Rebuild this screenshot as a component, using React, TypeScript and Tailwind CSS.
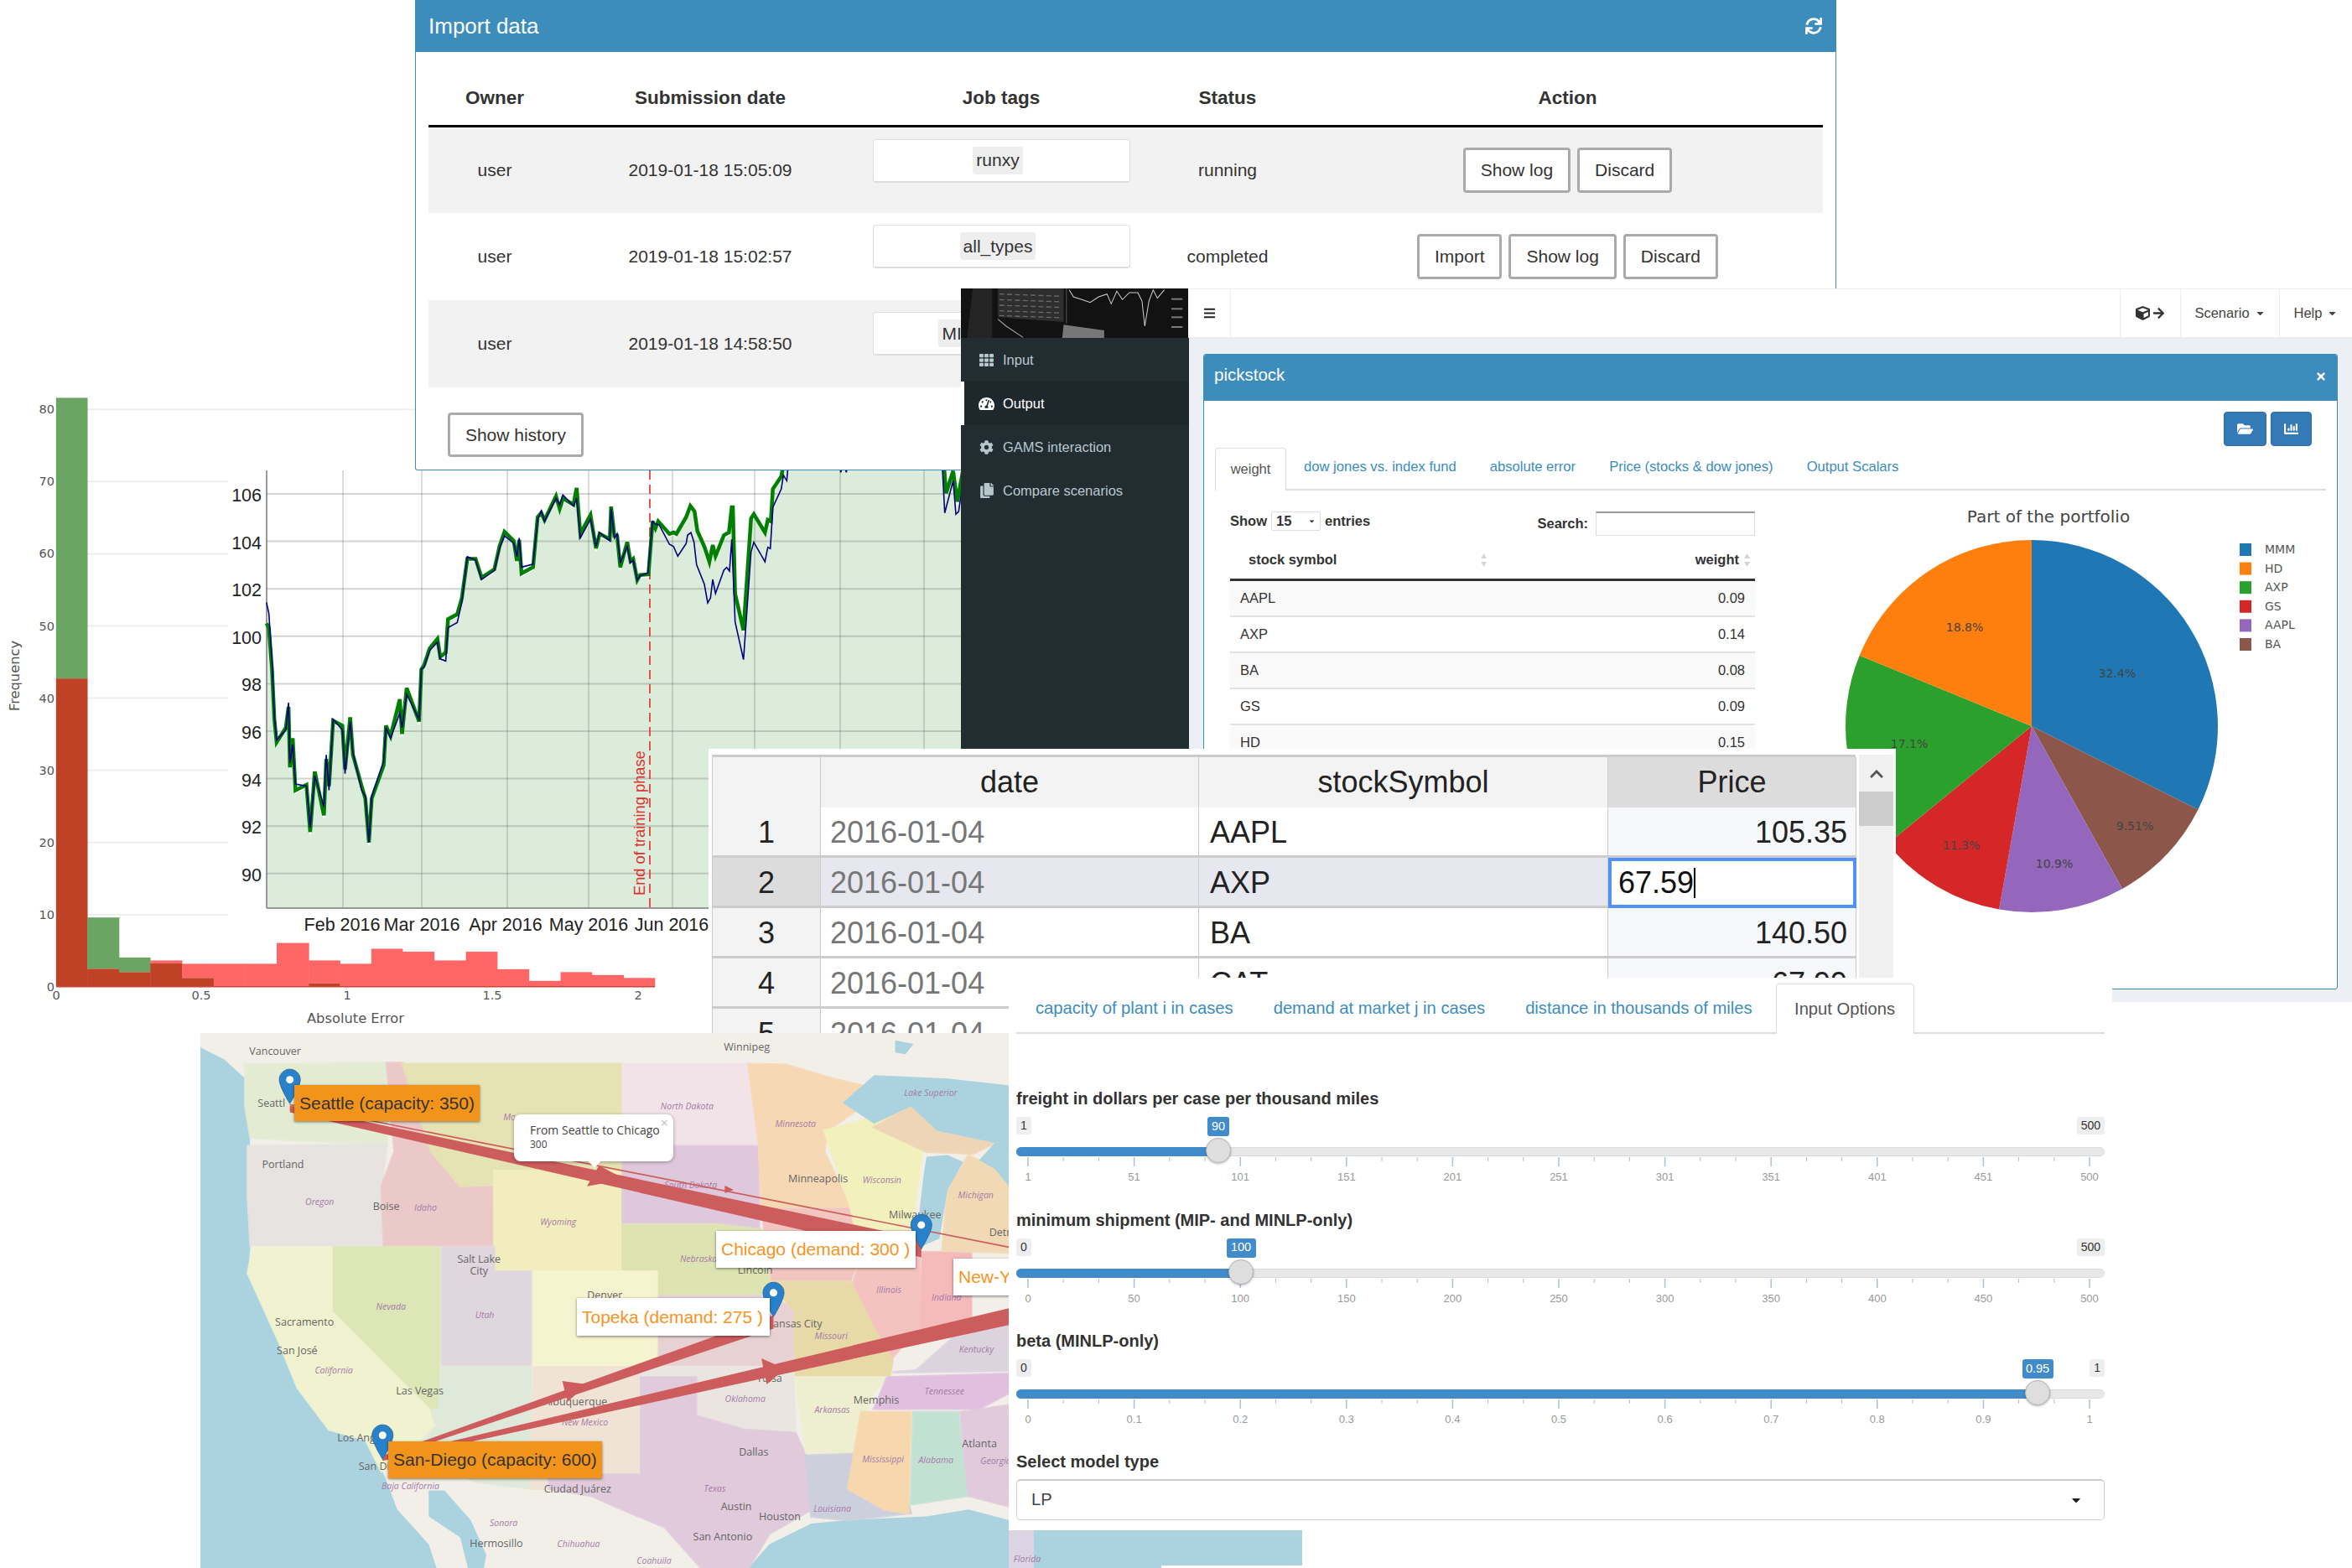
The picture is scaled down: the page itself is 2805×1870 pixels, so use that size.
import React from "react";
import {
  FaArrowRight,
  FaBars,
  FaCaretDown,
  FaChartBar,
  FaChevronUp,
  FaCog,
  FaCopy,
  FaCube,
  FaFolderOpen,
  FaSync,
  FaTachometerAlt,
  FaTh,
  FaTimes,
} from "react-icons/fa";

type Pt = [number, number];

// read off the crops of the reference, converted to page pixels
const h3 = (p: Pt): Pt => [p[0] * 0.548, 460 + p[1] * 0.4974];
const c8 = (p: Pt): Pt => [760 + p[0] / 3, 555 + p[1] / 3];
const m5 = (p: Pt): Pt => [230 + p[0] * 0.625, 1220 + p[1] * 0.4145];
const str = (ps: Pt[]) => ps.map((p) => `${p[0].toFixed(1)},${p[1].toFixed(1)}`).join(" ");

const greenLine: Pt[] = [
  ...([[580,570],[585,580],[592,680],[597,800],[602,855],[622,820],[628,770],[631,915],[637,845],[643,970],[667,957],[675,1070],[685,925],[705,1030],[710,895],[716,960],[725,803],[745,815],[751,920],[762,795],[768,885],[787,960],[795,990],[803,1095],[809,990],[835,910],[840,815],[850,840],[870,752],[875,835],[885,725],[912,805],[917,680],[923,670],[935,630],[952,607],[958,650],[970,640],[975,560],[995,548],[1005,510],[1017,415],[1035,415],[1048,460],[1076,440],[1087,385],[1098,350],[1118,372],[1125,420],[1130,370],[1135,450],[1160,435],[1170,315],[1178,305],[1185,322],[1210,265],[1218,295],[1225,270],[1248,285],[1255,245],[1263,355],[1285,310],[1297,390],[1305,355],[1327,368],[1330,290],[1337,360],[1343,360],[1350,435],[1365,375],[1372,420],[1378,415]] as Pt[]).map(h3),
  ...([[0,410],[10,392],[40,390],[55,200],[65,225],[75,200],[115,245],[130,240],[140,245],[175,185],[190,145],[205,165],[215,235],[240,290],[258,345],[270,285],[280,325],[310,250],[328,240],[338,150],[342,150],[350,460],[380,590],[407,190],[417,175],[457,240],[467,195],[478,200],[485,85],[515,40],[520,15],[535,-100],[1090,-100],[1105,100],[1130,20],[1145,130],[1165,20]] as Pt[]).map(c8),
];

const blueLine: Pt[] = [
  ...([[580,520],[585,545],[592,660],[597,790],[602,850],[622,825],[628,760],[631,905],[637,860],[643,955],[667,960],[675,1060],[685,935],[705,1010],[710,885],[716,970],[725,800],[745,825],[751,930],[762,805],[768,880],[787,970],[795,985],[803,1095],[809,985],[835,900],[840,820],[850,845],[870,785],[875,820],[885,740],[912,800],[917,680],[923,675],[935,635],[952,615],[958,655],[970,660],[975,580],[995,568],[1005,520],[1017,410],[1035,418],[1048,465],[1076,443],[1087,390],[1098,360],[1118,378],[1125,410],[1130,365],[1135,435],[1160,428],[1170,320],[1178,300],[1185,325],[1210,270],[1218,285],[1225,262],[1248,288],[1255,270],[1263,365],[1285,320],[1297,385],[1305,352],[1327,372],[1330,295],[1337,365],[1343,355],[1350,425],[1365,385],[1372,425],[1378,418]] as Pt[]).map(h3),
  ...([[0,410],[10,395],[38,385],[55,200],[65,210],[78,212],[115,282],[130,290],[145,325],[175,280],[180,250],[192,240],[203,275],[212,355],[240,425],[252,492],[262,475],[270,408],[280,458],[310,375],[320,365],[330,378],[338,265],[350,560],[380,695],[407,310],[417,275],[457,345],[467,293],[476,298],[485,150],[515,85],[523,35],[535,55],[545,-60],[722,-30],[728,25],[738,-10],[748,25],[758,-30],[1088,-60],[1100,170],[1130,55],[1140,175],[1150,165],[1165,60]] as Pt[]).map(c8),
];

const histEdges = [122,190,259,327,396,465,533,602,672,740,808,876,945,1014,1082,1151,1220,1288,1357,1425];
const redTops = [702,1398,1406,1378,1386,1386,1386,1336,1378,1386,1350,1357,1378,1357,1399,1427,1406,1413,1420];
const greenTops = [29,1275,1371,1385,1420,1441,1441,1441,1433,1441,1441,1441,1441,1441,1441,1441,1441,1441,1441];

const States: [string, string, Pt[]][] = [
  ["WA", "#e3ecd3", [[100,120],[370,115],[370,350],[110,330],[100,240]]],
  ["OR", "#e6e3e1", [[105,355],[370,350],[360,470],[365,640],[110,640],[105,500]]],
  ["ID", "#ecc9c9", [[370,115],[400,115],[455,370],[510,470],[572,470],[575,640],[365,640],[360,470],[385,370]]],
  ["MT", "#e5e2b3", [[400,118],[820,118],[820,425],[575,425],[570,465],[510,470],[455,370]]],
  ["WY", "#f1edbd", [[575,425],[820,425],[820,715],[575,715]]],
  ["ND", "#f2e3e8", [[820,118],[1060,118],[1075,350],[820,350]]],
  ["SD", "#e0c8dc", [[820,355],[1080,355],[1080,590],[1000,575],[820,575]]],
  ["NE", "#dde4b2", [[820,580],[1000,580],[1085,595],[1105,780],[885,780],[885,715],[820,715]]],
  ["MN", "#f7d8b4", [[1060,118],[1130,120],[1220,160],[1320,195],[1210,310],[1205,370],[1255,530],[1085,530],[1080,350]]],
  ["IA", "#f2c5c0", [[1085,535],[1265,535],[1280,640],[1255,740],[1105,740]]],
  ["WI", "#f2f0bd", [[1205,310],[1330,260],[1395,330],[1385,440],[1370,600],[1265,600],[1255,530]]],
  ["IL", "#f4c3bf", [[1265,600],[1385,600],[1390,870],[1330,970],[1300,880],[1255,770],[1270,700]]],
  ["IN", "#f5baba", [[1392,660],[1485,660],[1485,860],[1390,890]]],
  ["MI", "#f2d9b5", [[1440,480],[1480,380],[1530,420],[1557,470],[1557,660],[1430,655]]],
  ["UP", "#eed5b5", [[1300,300],[1370,240],[1420,310],[1530,345],[1490,375],[1400,370]]],
  ["MO", "#e8d9a8", [[1105,745],[1255,745],[1300,880],[1335,970],[1330,1015],[1150,1015],[1145,830]]],
  ["KS", "#e8d1d3", [[885,785],[1110,785],[1145,830],[1145,985],[885,985]]],
  ["CO", "#f5f4cf", [[645,715],[885,715],[885,985],[645,985]]],
  ["UT", "#e0d7de", [[475,645],[575,645],[575,715],[645,715],[645,985],[475,985]]],
  ["NV", "#dce6b6", [[265,645],[470,645],[470,1110],[450,1115],[265,830]]],
  ["CA", "#f0f2d0", [[115,645],[265,645],[265,830],[450,1110],[465,1160],[430,1205],[360,1290],[330,1200],[260,1170],[200,1050],[165,920],[105,720]]],
  ["AZ", "#dfe9d9", [[475,990],[645,990],[645,1340],[540,1320],[420,1230],[465,1160],[455,1115],[470,1110]]],
  ["NM", "#f0e3d5", [[650,990],[855,990],[855,1300],[680,1300],[680,1340],[645,1340]]],
  ["OK", "#eae5e1", [[960,990],[1145,990],[1150,1180],[1050,1170],[960,1130],[960,1020],[855,1020],[855,990]]],
  ["TX", "#e0cadb", [[855,1020],[960,1020],[960,1130],[1050,1170],[1150,1180],[1170,1245],[1180,1400],[1100,1470],[1060,1568],[970,1568],[900,1450],[820,1400],[760,1360],[680,1340],[680,1300],[855,1300]]],
  ["AR", "#eeefd0", [[1150,1020],[1330,1020],[1300,1060],[1270,1170],[1260,1235],[1170,1235]]],
  ["LA", "#cdd0dc", [[1170,1245],[1260,1240],[1250,1340],[1360,1350],[1370,1410],[1250,1430],[1180,1420]]],
  ["MS", "#f7d8ae", [[1275,1120],[1370,1120],[1365,1410],[1320,1400],[1250,1340],[1262,1240]]],
  ["AL", "#c3e1d3", [[1375,1120],[1460,1120],[1480,1360],[1370,1385]]],
  ["GA", "#e0cadb", [[1465,1120],[1557,1100],[1557,1390],[1480,1360]]],
  ["TN", "#e0bfdf", [[1325,1020],[1557,1010],[1557,1065],[1500,1110],[1300,1110]]],
  ["KY", "#dcd3de", [[1335,1005],[1380,1000],[1440,920],[1480,860],[1557,870],[1557,1000]]],
];

const Lakes: Pt[][] = [
  [[1300,150],[1440,160],[1560,180],[1560,340],[1530,345],[1420,310],[1370,240],[1300,290],[1240,230]],
  [[1400,385],[1440,380],[1470,400],[1440,480],[1425,620],[1395,640],[1385,560],[1395,430]],
  [[1530,345],[1557,340],[1557,470],[1530,420],[1500,395]],
  [[1340,50],[1375,60],[1360,90],[1340,85]],
];

const cityLabels: [string, number, number][] = [
  ["Vancouver", 157, 81], ["Winnipeg", 1057, 69], ["Portland", 172, 408], ["Boise", 369, 529],
  ["Salt Lake", 546, 681], ["City", 546, 713], ["Denver", 786, 783], ["Sacramento", 213, 861],
  ["San José", 199, 944], ["Las Vegas", 433, 1059], ["Los Ang", 312, 1194], ["San Di", 346, 1277],
  ["Seattl", 150, 231], ["Minneapolis", 1193, 449], ["Milwaukee", 1378, 552], ["Lincoln", 1073, 711],
  ["Kansas City", 1148, 865], ["Dallas", 1070, 1236], ["Austin", 1037, 1391], ["Houston", 1120, 1421],
  ["San Antonio", 1011, 1479], ["Ciudad Juárez", 734, 1341], ["Hermosillo", 579, 1497], ["Memphis", 1304, 1086],
  ["Atlanta", 1501, 1211], ["Albuquerque", 730, 1091], ["Tulsa", 1100, 1023], ["Detr", 1540, 603],
];

const stateLabels: [string, number, number][] = [
  ["North Dakota", 943, 240], ["South Dakota", 950, 466], ["Minnesota", 1150, 290], ["Wisconsin", 1315, 451],
  ["Michigan", 1494, 495], ["Oregon", 242, 513], ["Idaho", 444, 531], ["Wyoming", 697, 572],
  ["Nebraska", 965, 678], ["Nevada", 378, 816], ["Utah", 557, 840], ["California", 269, 998],
  ["Illinois", 1328, 768], ["Indiana", 1438, 790], ["Missouri", 1218, 900], ["Kentucky", 1495, 938],
  ["Oklahoma", 1054, 1081], ["Arkansas", 1220, 1113], ["Tennessee", 1434, 1060], ["Texas", 996, 1339],
  ["Louisiana", 1220, 1396], ["Mississippi", 1317, 1254], ["Alabama", 1418, 1256], ["Georgia", 1532, 1260],
  ["New Mexico", 748, 1149], ["Sonora", 593, 1438], ["Chihuahua", 736, 1498], ["Coahuila", 880, 1547],
  ["Baja California", 415, 1331], ["Lake Superior", 1408, 201], ["Mo", 604, 270],
];

function Pin({ tip }: { tip: Pt }) {
  return (
    <g transform={`translate(${tip[0] - 12.5} ${tip[1] - 41})`}>
      <path d="M12.5 0C5.6 0 0 5.6 0 12.5 0 21 12.5 41 12.5 41S25 21 25 12.5C25 5.6 19.4 0 12.5 0z" fill="#2a81cb" stroke="#2e6c97" />
      <circle cx="12.5" cy="12.5" r="4.5" fill="#fff" />
    </g>
  );
}

function Histogram() {
  const ticksY = [0, 10, 20, 30, 40, 50, 60, 70, 80];
  const ticksX: [string, number][] = [["0", 67], ["0.5", 240], ["1", 414], ["1.5", 587], ["2", 761]];
  const base = 460 + 1441 * 0.4974;
  const ty = (z: number) => 460 + z * 0.4974;
  return (
    <svg className="absolute left-0 top-[460px] w-[845px] h-[772px] [font-family:'DejaVu_Sans',sans-serif]" viewBox="0 460 845 772">
      {ticksY.slice(1).map((t) => (
        <line key={t} x1="67" x2="845" y1={1177 - t * 8.61} y2={1177 - t * 8.61} stroke="#eeeeee" strokeWidth="2" />
      ))}
      {histEdges.slice(0, -1).map((e, i) => {
        const x = e * 0.548;
        const w = (histEdges[i + 1] - e) * 0.548 + 0.4;
        const r = redTops[i];
        const g = greenTops[i];
        const low = Math.max(r, g);
        return (
          <g key={e}>
            {g < r && <rect x={x} y={ty(g)} width={w} height={ty(r) - ty(g)} fill="#6aa564" />}
            {r < g && <rect x={x} y={ty(r)} width={w} height={ty(g) - ty(r)} fill="#ff6666" />}
            {low < 1441 && <rect x={x} y={ty(low)} width={w} height={base - ty(low)} fill="#bf4227" />}
          </g>
        );
      })}
      <line x1="67" x2="781" y1={base} y2={base} stroke="#c4483a" strokeWidth="1.5" />
      {ticksY.map((t) => (
        <text key={t} x="65" y={1182 - t * 8.61} textAnchor="end" fontSize="14.5" fill="#555">{t}</text>
      ))}
      {ticksX.map(([l, x]) => (
        <text key={l} x={x} y="1192" textAnchor="middle" fontSize="14.5" fill="#555">{l}</text>
      ))}
      <text x="424" y="1220" textAnchor="middle" fontSize="16.3" fill="#555">Absolute Error</text>
      <text transform="translate(23 806) rotate(-90)" textAnchor="middle" fontSize="16.3" fill="#555">Frequency</text>
    </svg>
  );
}

function PriceChart() {
  const ticks = [106, 104, 102, 100, 98, 96, 94, 92, 90];
  const months: [string, number][] = [["Feb 2016", 408], ["Mar 2016", 503], ["Apr 2016", 603], ["May 2016", 702], ["Jun 2016", 801]];
  const verticals = [409, 503, 605, 702, 802, 900, 1002, 1102];
  const last = greenLine[greenLine.length - 1];
  const area = `318,1083 ${str(greenLine.map((p) => [p[0], p[1] + 3] as Pt))} ${last[0]},1083`;
  return (
    <svg className="absolute left-[272px] top-[561px] w-[874px] h-[563px] bg-white" viewBox="272 561 874 563">
      <polygon points={area} fill="#dbecdb" stroke="#ffffff" strokeWidth="2" />
      {ticks.map((t, i) => (
        <line key={t} x1="318" x2="1146" y1={589 + i * 56.6} y2={589 + i * 56.6} stroke="#555" strokeOpacity="0.25" strokeWidth="2" />
      ))}
      {verticals.map((x) => (
        <line key={x} x1={x} x2={x} y1="561" y2="1083" stroke="#555" strokeOpacity="0.28" strokeWidth="1.5" />
      ))}
      <line x1="318" x2="318" y1="561" y2="1083" stroke="#777" strokeWidth="1.5" />
      <line x1="318" x2="1146" y1="1083" y2="1083" stroke="#777" strokeWidth="1.5" />
      <line x1="775" x2="775" y1="561" y2="1083" stroke="#e8413c" strokeWidth="1.8" strokeDasharray="11 6" />
      <polyline points={str(greenLine)} fill="none" stroke="#008000" strokeWidth="4.5" strokeLinejoin="miter" />
      <polyline points={str(blueLine)} fill="none" stroke="#000080" strokeWidth="1.6" />
      {ticks.map((t, i) => (
        <text key={t} x="312" y={598 + i * 56.6} textAnchor="end" fontSize="21.5" fill="#222">{t}</text>
      ))}
      {months.map(([l, x]) => (
        <text key={l} x={x} y="1110" textAnchor="middle" fontSize="21.5" fill="#222">{l}</text>
      ))}
      <text transform="translate(769 1068) rotate(-90)" fontSize="18.3" fill="#e02f2f">End of training phase</text>
    </svg>
  );
}

function ImportPanel() {
  const rows = [
    { date: "2019-01-18 15:05:09", tag: "runxy", status: "running", actions: ["Show log", "Discard"] },
    { date: "2019-01-18 15:02:57", tag: "all_types", status: "completed", actions: ["Import", "Show log", "Discard"] },
    { date: "2019-01-18 14:58:50", tag: "MINLP_model", status: "completed", actions: ["Import", "Show log", "Discard"] },
  ];
  return (
    <section className="absolute left-[495px] top-0 w-[1695px] h-[561px] bg-white border-x border-b border-[#3c8dbc] rounded-b-[3px] text-[#333] text-[21px]">
      <div className="h-[62px] bg-[#3c8dbc] text-white flex items-center justify-between pl-[15px] pr-[16px]">
        <span className="text-[26px]">Import data</span>
        <FaSync className="w-[20px] h-[20px]" />
      </div>
      <div className="px-[15px]">
        <table className="w-[1663px] table-fixed border-collapse">
          <colgroup>
            <col className="w-[158px]" />
            <col className="w-[356px]" />
            <col className="w-[338px]" />
            <col className="w-[202px]" />
            <col className="w-[609px]" />
          </colgroup>
          <thead>
            <tr className="h-[88px] border-b-[3px] border-black text-[22.5px] font-bold text-center">
              {["Owner", "Submission date", "Job tags", "Status", "Action"].map((h) => (
                <th key={h} className="pt-[24px] font-bold">{h}</th>
              ))}
            </tr>
          </thead>
          <tbody>
            {rows.map((r, i) => (
              <tr key={r.date} className={`h-[104px] text-center ${i % 2 === 0 ? "bg-[#f2f2f2]" : "bg-white"}`}>
                <td>user</td>
                <td>{r.date}</td>
                <td className="align-top pt-[14px]">
                  <div className="mx-auto w-[307px] h-[52px] bg-white border border-b-2 border-[#dddddd] rounded-[4px] pr-[8px] flex items-center justify-center">
                    <span className="h-[33px] px-[4px] bg-[#eeeeee] rounded-[3px] flex items-center">{r.tag}</span>
                  </div>
                </td>
                <td>{r.status}</td>
                <td>
                  <div className="flex justify-center gap-[8px]">
                    {r.actions.map((a) => (
                      <button key={a} className="h-[54px] px-[18px] bg-white border-[3px] border-[#aaaaaa] rounded-[4px]">{a}</button>
                    ))}
                  </div>
                </td>
              </tr>
            ))}
          </tbody>
        </table>
        <button className="mt-[30px] ml-[23px] h-[53px] w-[162px] bg-white border-[3px] border-[#aaaaaa] rounded-[4px]">Show history</button>
      </div>
    </section>
  );
}

function Logo() {
  return (
    <svg className="w-[271px] h-[59px] block" viewBox="18 15 812 177" preserveAspectRatio="none">
      <rect x="18" y="15" width="812" height="177" fill="#121212" />
      <polygon points="60,15 130,15 130,192 40,192" fill="#242424" />
      <polygon points="150,15 385,15 385,135 150,118" fill="#2e2e2e" />
      {[35, 55, 75, 95, 112].map((y) => (
        <line key={y} x1="155" x2="380" y1={y} y2={y + 8} stroke="#6a6a6a" strokeWidth="4" strokeDasharray="18 10" />
      ))}
      <line x1="395" x2="395" y1="15" y2="140" stroke="#555" strokeWidth="3" />
      <polyline points="150,125 180,150 240,190" fill="none" stroke="#aaa" strokeWidth="3" />
      <polygon points="385,145 530,165 530,192 380,192" fill="#777" />
      <polyline points="405,20 420,45 450,55 480,65 510,45 540,35 555,70 575,25 595,55 620,30 650,30 665,60 675,150 690,60 705,20 720,50 745,20" fill="none" stroke="#cfcfcf" strokeWidth="3" />
      {[50, 85, 115, 150].map((y) => (
        <rect key={y} x="770" y={y} width="40" height="6" fill="#7a7a7a" />
      ))}
    </svg>
  );
}

function Sidebar() {
  const items = [
    { label: "Input", icon: <FaTh className="w-[17px] h-[17px]" /> },
    { label: "Output", icon: <FaTachometerAlt className="w-[19px] h-[19px]" />, active: true },
    { label: "GAMS interaction", icon: <FaCog className="w-[17px] h-[17px]" /> },
    { label: "Compare scenarios", icon: <FaCopy className="w-[16px] h-[18px]" /> },
  ];
  return (
    <aside className="w-[272px] shrink-0 bg-[#222d32] text-[16.5px] text-[#b8c7ce]">
      <div className="bg-white pr-[1px]">
        <Logo />
      </div>
      {items.map((it) =>
        it.active ? (
          <div key={it.label} className="h-[52px] bg-[#1e282c] border-l-[4px] border-white text-white flex items-center pl-[17px] gap-[10px]">
            <span className="w-[19px] flex justify-center">{it.icon}</span>
            {it.label}
          </div>
        ) : (
          <div key={it.label} className="h-[52px] flex items-center pl-[21px] gap-[10px]">
            <span className="w-[19px] flex justify-center">{it.icon}</span>
            {it.label}
          </div>
        )
      )}
    </aside>
  );
}

function Navbar() {
  return (
    <nav className="h-[60px] bg-white border-t border-b-2 border-[#eeeeee] flex items-stretch text-[16.5px] text-[#444]">
      <div className="w-[50px] border-r border-[#eeeeee] flex items-center justify-center text-[#222]">
        <FaBars className="w-[15px] h-[15px]" />
      </div>
      <div className="flex-1" />
      <div className="w-[73px] border-x border-[#eeeeee] flex items-center justify-center gap-[3px] text-[#333]">
        <FaCube className="w-[17px] h-[17px]" />
        <FaArrowRight className="w-[15px] h-[15px]" />
      </div>
      <div className="w-[118px] border-r border-[#eeeeee] flex items-center justify-center gap-[6px]">
        Scenario <FaCaretDown className="w-[13px] h-[13px]" />
      </div>
      <div className="w-[86px] flex items-center justify-center gap-[6px]">
        Help <FaCaretDown className="w-[13px] h-[13px]" />
      </div>
    </nav>
  );
}

function PortfolioPie() {
  const slices: [string, number, string][] = [
    ["MMM", 32.4, "#1f77b4"],
    ["BA", 9.51, "#8c564b"],
    ["AAPL", 10.9, "#9467bd"],
    ["GS", 11.3, "#d62728"],
    ["AXP", 17.1, "#2ca02c"],
    ["HD", 18.8, "#ff7f0e"],
  ];
  const legend = ["MMM", "HD", "AXP", "GS", "AAPL", "BA"];
  const pct: [string, number, number][] = [
    ["32.4%", 2525, 804], ["18.8%", 2343, 749], ["17.1%", 2277, 888],
    ["11.3%", 2339, 1009], ["10.9%", 2450, 1031], ["9.51%", 2546, 986],
  ];
  const cx = 2423;
  const cy = 867;
  const r = 222;
  let acc = 0;
  return (
    <svg className="w-[694px] h-[596px] [font-family:'DejaVu_Sans',sans-serif]" viewBox="2093 586 694 596">
      <text x="2443" y="624" textAnchor="middle" fontSize="20" fill="#444">Part of the portfolio</text>
      {slices.map(([n, v, c]) => {
        const a0 = (acc / 100.01) * 2 * Math.PI;
        acc += v;
        const a1 = (acc / 100.01) * 2 * Math.PI;
        const d = `M${cx} ${cy}L${cx + r * Math.sin(a0)} ${cy - r * Math.cos(a0)}A${r} ${r} 0 ${v > 50 ? 1 : 0} 1 ${cx + r * Math.sin(a1)} ${cy - r * Math.cos(a1)}Z`;
        return <path key={n} d={d} fill={c} />;
      })}
      {pct.map(([t, x, y]) => (
        <text key={t} x={x} y={y + 5} textAnchor="middle" fontSize="14" fill="#444">{t}</text>
      ))}
      {legend.map((n, i) => {
        const c = slices.find((s) => s[0] === n)![2];
        return (
          <g key={n}>
            <rect x="2671" y={649 + i * 22.6} width="14" height="15" fill={c} />
            <text x="2701" y={661 + i * 22.6} fontSize="14" fill="#555">{n}</text>
          </g>
        );
      })}
    </svg>
  );
}

function SortIcon() {
  return (
    <svg className="w-[9px] h-[18px] shrink-0" viewBox="0 0 9 18">
      <path d="M4.5 1L8 7H1z" fill="#d5d5d5" />
      <path d="M4.5 17L8 11H1z" fill="#d5d5d5" />
    </svg>
  );
}

function PickstockPanel() {
  const rows: [string, string][] = [["AAPL", "0.09"], ["AXP", "0.14"], ["BA", "0.08"], ["GS", "0.09"], ["HD", "0.15"]];
  const tabs = ["dow jones vs. index fund", "absolute error", "Price (stocks & dow jones)", "Output Scalars"];
  return (
    <section className="ml-[17px] mt-[18px] w-[1353px] h-[758px] bg-white border border-[#3c8dbc] rounded-[3px] overflow-hidden text-[16.5px] text-[#333]">
      <div className="h-[55px] bg-[#3c8dbc] text-white flex items-center justify-between pl-[12px] pr-[12px] pb-[6px]">
        <span className="text-[20.5px]">pickstock</span>
        <FaTimes className="w-[14px] h-[14px] mt-[3px]" />
      </div>
      <div className="mt-[13px] pr-[30px] flex justify-end gap-[5px]">
        <button className="w-[51px] h-[41px] bg-[#337ab7] border border-[#2e6da4] rounded-[4px] flex items-center justify-center text-white">
          <FaFolderOpen className="w-[19px] h-[19px]" />
        </button>
        <button className="w-[49px] h-[41px] bg-[#337ab7] border border-[#2e6da4] rounded-[4px] flex items-center justify-center text-white">
          <FaChartBar className="w-[17px] h-[17px]" />
        </button>
      </div>
      <div className="mt-[2px] mx-[13px] h-[51px] border-b-2 border-[#dddddd] flex items-stretch">
        <div className="w-[85px] h-[51px] -mb-[2px] bg-white border-x border-t border-[#dddddd] rounded-t-[4px] text-[#555] pb-[2px] flex items-center justify-center">weight</div>
        <div className="ml-[21px] flex items-center gap-[40px] text-[#3c8dbc] text-[16.6px] pb-[2px]">
          {tabs.map((t) => (
            <span key={t}>{t}</span>
          ))}
        </div>
      </div>
      <div className="flex">
        <div className="ml-[31px] w-[626px] shrink-0">
          <div className="mt-[25px] flex justify-between items-start">
            <div className="flex items-center gap-[5px] font-bold -mt-[1px]">
              Show
              <span className="w-[59px] h-[23px] border border-[#dddddd] rounded-[2px] flex items-center justify-between px-[5px]">
                15
                <FaCaretDown className="w-[9px] h-[9px]" />
              </span>
              entries
            </div>
            <div className="flex items-center gap-[9px] font-bold">
              Search:
              <span className="block w-[190px] h-[29px] border border-[#dddddd] border-t-2 border-t-[#999999]" />
            </div>
          </div>
          <div className="h-[54px] pt-[6px] border-b-[3px] border-[#333] flex items-center font-bold pl-[22px] pr-[5px]">
            <span className="w-[285px] flex items-center justify-between">
              stock symbol <SortIcon />
            </span>
            <span className="flex-1 flex items-center justify-end gap-[5px]">
              weight <SortIcon />
            </span>
          </div>
          {rows.map(([s, w], i) => (
            <div key={s} className={`h-[43px] border-b-2 border-[#e2e2e2] flex items-center justify-between pl-[12px] pr-[12px] ${i % 2 === 0 ? "bg-[#f9f9f9]" : "bg-white"}`}>
              <span>{s}</span>
              <span>{w}</span>
            </div>
          ))}
        </div>
        <PortfolioPie />
      </div>
    </section>
  );
}

function AppWindow() {
  return (
    <div className="absolute left-[1146px] top-[344px] w-[1659px] h-[851px] flex">
      <Sidebar />
      <div className="flex-1 bg-[#ecf0f5]">
        <Navbar />
        <PickstockPanel />
      </div>
    </div>
  );
}

function PriceGrid() {
  const rows = [
    { n: 1, sym: "AAPL", price: "105.35" },
    { n: 2, sym: "AXP", price: "67.59", edit: true },
    { n: 3, sym: "BA", price: "140.50" },
    { n: 4, sym: "CAT", price: "67.99" },
    { n: 5, sym: "CSCO", price: "26.41" },
  ];
  return (
    <div className="absolute left-[845px] top-[893px] w-[1416px] h-[339px] bg-white overflow-hidden pl-[4px] pt-[7px] flex text-[36px] text-[#222]">
      <div className="w-[1364px] shrink-0 grid grid-cols-[129px_451px_488px_296px] auto-rows-[60px] border-t-[3px] border-l border-[#cccccc]">
        <div className="h-[63px] bg-[#f3f3f3] border-r border-b-[3px] border-[#cccccc]" />
        <div className="h-[63px] bg-[#f3f3f3] border-r border-b-[3px] border-[#cccccc] flex items-center justify-center">date</div>
        <div className="h-[63px] bg-[#f3f3f3] border-r border-b-[3px] border-[#cccccc] flex items-center justify-center">stockSymbol</div>
        <div className="h-[63px] bg-[#dcdcdc] border-r border-b-[3px] border-[#cccccc] flex items-center justify-center">Price</div>
        {rows.map((r) => (
          <React.Fragment key={r.n}>
            <div className={`pt-[2px] border-r border-b-[3px] border-[#cccccc] flex items-center justify-center ${r.edit ? "bg-[#dcdcdc]" : "bg-[#f3f3f3]"}`}>{r.n}</div>
            <div className={`pt-[2px] border-r border-b-[3px] border-[#cccccc] flex items-center pl-[11px] text-[#777] ${r.edit ? "bg-[#e6e7ef]" : "bg-white"}`}>2016-01-04</div>
            <div className={`pt-[2px] border-r border-b-[3px] border-[#cccccc] flex items-center pl-[13px] ${r.edit ? "bg-[#e6e7ef]" : "bg-white"}`}>{r.sym}</div>
            {r.edit ? (
              <div className="bg-white border-[4px] border-[#5292f7] flex items-center pl-[8px] text-[#111]">
                {r.price}
                <span className="w-[2px] h-[36px] bg-black" />
              </div>
            ) : (
              <div className="pt-[2px] bg-[#f7f8fb] border-r border-b-[3px] border-[#cccccc] flex items-center justify-end pr-[10px]">{r.price}</div>
            )}
          </React.Fragment>
        ))}
      </div>
      <div className="ml-[4px] w-[41px] bg-[#f0f0f0] flex flex-col items-center">
        <FaChevronUp className="mt-[14px] w-[20px] h-[18px] text-[#555]" />
        <div className="mt-[12px] w-full h-[41px] bg-[#cdcdcd]" />
      </div>
    </div>
  );
}

function UsMap() {
  const thick = (a: Pt, b: Pt, ha: number, hb: number) => {
    const A = m5(a);
    const B = m5(b);
    return str([[A[0], A[1] - ha], [B[0], B[1] - hb], [B[0], B[1] + hb], [A[0], A[1] + ha]]);
  };
  const land: Pt[] = [[14,28],[14,70],[60,105],[100,160],[100,240],[110,300],[105,500],[110,640],[105,720],[165,920],[200,1050],[260,1170],[330,1200],[365,1300],[390,1400],[450,1500],[465,1568],[1060,1568],[1100,1500],[1180,1440],[1250,1430],[1400,1420],[1480,1400],[1557,1430],[1700,1600],[2100,1600],[2100,28]];
  const gulf: Pt[] = [[450,1345],[480,1345],[530,1430],[560,1530],[555,1568],[525,1568],[510,1480],[450,1420]];
  return (
    <div className="absolute left-[239px] top-[1232px] w-[1314px] h-[638px] overflow-hidden bg-[#aad3df] [font-family:'Open_Sans',sans-serif]">
      <svg className="absolute inset-0 w-[1314px] h-[638px]" viewBox="239 1232 1314 638">
        <polygon points={str(land.map(m5))} fill="#f2efe9" />
        <polygon points={str(gulf.map(m5))} fill="#aad3df" />
        <g className="blur-[0.6px]">
          {States.map(([k, c, ps]) => (
            <polygon key={k} points={str(ps.map(m5))} fill={c} stroke={c} strokeWidth="3" strokeOpacity="0.85" />
          ))}
          {Lakes.map((ps, i) => (
            <polygon key={i} points={str(ps.map(m5))} fill="#aad3df" />
          ))}
        </g>
        <rect x="1203" y="1825" width="350" height="45" fill="#aad3df" />
        <rect x="1203" y="1825" width="30" height="45" fill="#dcd3e3" />
        <rect x="1385" y="1867" width="168" height="3" fill="#ffffff" />
        <g fontSize="12.5" fill="#666" textAnchor="middle">
          {cityLabels.map(([t, x, y]) => (
            <text key={t} x={230 + x * 0.625} y={1220 + y * 0.4145 + 4}>{t}</text>
          ))}
        </g>
        <g fontSize="10.5" fill="#a57ba8" fontStyle="italic" textAnchor="middle">
          {stateLabels.map(([t, x, y]) => (
            <text key={t} x={230 + x * 0.625} y={1220 + y * 0.4145 + 4}>{t}</text>
          ))}
          <text x="1225" y="1863">Florida</text>
        </g>
        <g fill="#cd5c5c">
          <line x1={m5([185,235])[0]} y1={m5([185,235])[1]} x2={m5([1557,645])[0]} y2={m5([1557,645])[1]} stroke="#cd5c5c" strokeWidth="1.6" />
          <polygon points={str(([[1015,468],[1015,490],[1032,480]] as Pt[]).map(m5))} />
          <polygon points={thick([185,247], [1390,648], 4, 11)} />
          <polygon points={str(([[775,410],[752,470],[825,450]] as Pt[]).map(m5))} />
          <polygon points={thick([362,1250], [1108,860], 2, 8)} />
          <polygon points={str(([[705,1030],[715,1090],[752,1040]] as Pt[]).map(m5))} />
          <polygon points={thick([362,1255], [1557,845], 2, 10)} />
          <polygon points={str(([[1085,965],[1095,1040],[1130,995]] as Pt[]).map(m5))} />
        </g>
        <Pin tip={m5([185,232])} />
        <Pin tip={m5([1390,650])} />
        <Pin tip={m5([1108,845])} />
        <Pin tip={m5([362,1255])} />
      </svg>
      <div className="absolute left-[112px] top-[62px] w-[221px] h-[43px] px-[6px] bg-[#f3941a] text-[21px] text-[#333] shadow-[0_1px_3px_rgba(0,0,0,0.5)] flex items-center whitespace-nowrap [font-family:'Liberation_Sans',sans-serif]">Seattle (capacity: 350)</div>
      <div className="absolute left-[615px] top-[236px] w-[238px] h-[44px] px-[6px] bg-white text-[21px] text-[#f7931e] shadow-[0_1px_3px_rgba(0,0,0,0.5)] flex items-center whitespace-nowrap [font-family:'Liberation_Sans',sans-serif]">Chicago (demand: 300 )</div>
      <div className="absolute left-[449px] top-[316px] w-[230px] h-[45px] px-[6px] bg-white text-[21px] text-[#f7931e] shadow-[0_1px_3px_rgba(0,0,0,0.5)] flex items-center whitespace-nowrap [font-family:'Liberation_Sans',sans-serif]">Topeka (demand: 275 )</div>
      <div className="absolute left-[898px] top-[269px] w-[240px] h-[44px] px-[6px] bg-white text-[21px] text-[#f7931e] shadow-[0_1px_3px_rgba(0,0,0,0.5)] flex items-center whitespace-nowrap [font-family:'Liberation_Sans',sans-serif]">New-York (demand: 325 )</div>
      <div className="absolute left-[224px] top-[487px] w-[255px] h-[44px] px-[6px] bg-[#f3941a] text-[21px] text-[#333] shadow-[0_1px_3px_rgba(0,0,0,0.5)] flex items-center whitespace-nowrap [font-family:'Liberation_Sans',sans-serif]">San-Diego (capacity: 600)</div>
      <div className="absolute left-[374px] top-[97px] w-[190px] h-[56px] bg-white rounded-[8px] pl-[19px] pt-[9px] text-[#444] text-[14px] leading-[19px] shadow-[0_1px_4px_rgba(0,0,0,0.35)]">
        <div>From Seattle to Chicago</div>
        <div className="text-[12px] leading-[15px]">300</div>
        <span className="absolute right-[6px] top-[1px] text-[16px] text-[#c3c3c3]">×</span>
        <span className="absolute left-[88px] -bottom-[8px] w-0 h-0 border-x-[8px] border-x-transparent border-t-[9px] border-t-white" />
      </div>
    </div>
  );
}

function Slider({ label, min, max, value, at, badge, ticks }: { label: string; min: string; max: string; value: string; at: number; badge: number; ticks: string[] }) {
  const step = 126.6;
  return (
    <div className="h-[144.5px]">
      <div className="h-[28px] flex items-center font-bold text-[20px] text-[#333]">{label}</div>
      <div className="relative h-[116px]">
        <span className="absolute left-0 top-[8px] h-[21px] px-[5px] bg-[#eeeeee] rounded-[3px] text-[14px] text-[#333] flex items-center">{min}</span>
        <span className="absolute right-0 top-[8px] h-[21px] px-[5px] bg-[#eeeeee] rounded-[3px] text-[14px] text-[#333] flex items-center">{max}</span>
        <div className="absolute left-0 right-0 top-[44px] h-[11px] rounded-full bg-[#e8e8e8] border border-[#dcdcdc]" />
        <div className="absolute left-0 top-[44px] h-[11px] rounded-l-full bg-[#428bca]" style={{ width: at }} />
        <span className="absolute top-[8px] h-[23px] bg-[#428bca] rounded-[3px] text-[14.5px] text-white flex items-center justify-center" style={{ left: at - badge / 2, width: badge }}>{value}</span>
        <svg className="absolute left-0 top-[56px] w-[1297px] h-[40px]" viewBox="0 0 1297 40">
          {ticks.map((t, i) => (
            <g key={t}>
              <line x1={14 + i * step} x2={14 + i * step} y1="0" y2="11" stroke="#a6c4de" strokeWidth="1.5" />
              {i < ticks.length - 1 && (
                <>
                  <line x1={14 + i * step + step / 3} x2={14 + i * step + step / 3} y1="0" y2="5" stroke="#bbbbbb" />
                  <line x1={14 + i * step + (2 * step) / 3} x2={14 + i * step + (2 * step) / 3} y1="0" y2="5" stroke="#bbbbbb" />
                </>
              )}
              <text x={14 + i * step} y="28" textAnchor="middle" fontSize="13" fill="#999">{t}</text>
            </g>
          ))}
        </svg>
        <div className="absolute top-[33px] w-[30px] h-[30px] rounded-full bg-[#dedede] border border-[#b5b5b5] shadow-[0_1px_3px_rgba(0,0,0,0.3)]" style={{ left: at - 15 }} />
      </div>
    </div>
  );
}

function InputOptions() {
  return (
    <section className="absolute left-[1203px] top-[1166px] w-[1316px] h-[659px] bg-white px-[9px] pt-[7px] text-[20.2px]">
      <div className="h-[60px] border-b-2 border-[#dddddd] flex items-stretch text-[#3c8dbc]">
        <div className="pl-[23px] flex items-center gap-[48px]">
          <span>capacity of plant i in cases</span>
          <span>demand at market j in cases</span>
          <span>distance in thousands of miles</span>
        </div>
        <div className="ml-[28px] w-[165px] h-[60px] bg-white border-x border-t border-[#dddddd] rounded-t-[4px] text-[#555] flex items-center justify-center">Input Options</div>
      </div>
      <div className="mt-[63px]">
        <Slider label="freight in dollars per case per thousand miles" min="1" max="500" value="90" at={241} badge={26} ticks={["1", "51", "101", "151", "201", "251", "301", "351", "401", "451", "500"]} />
        <Slider label="minimum shipment (MIP- and MINLP-only)" min="0" max="500" value="100" at={268} badge={35} ticks={["0", "50", "100", "150", "200", "250", "300", "350", "400", "450", "500"]} />
        <Slider label="beta (MINLP-only)" min="0" max="1" value="0.95" at={1218} badge={37} ticks={["0", "0.1", "0.2", "0.3", "0.4", "0.5", "0.6", "0.7", "0.8", "0.9", "1"]} />
        <div className="-mt-[1px] h-[28px] flex items-center font-bold text-[20px] text-[#333]">Select model type</div>
        <div className="mt-[7px] h-[49px] border border-t-2 border-[#cccccc] rounded-[5px] flex items-center justify-between pl-[17px] pr-[25px] text-[#444]">
          LP
          <FaCaretDown className="w-[16px] h-[16px] text-[#222]" />
        </div>
      </div>
    </section>
  );
}

export default function App() {
  return (
    <div className="relative w-[2805px] h-[1870px] overflow-hidden bg-white [font-family:'Liberation_Sans',Arial,sans-serif]">
      <Histogram />
      <PriceChart />
      <ImportPanel />
      <AppWindow />
      <PriceGrid />
      <UsMap />
      <InputOptions />
    </div>
  );
}
